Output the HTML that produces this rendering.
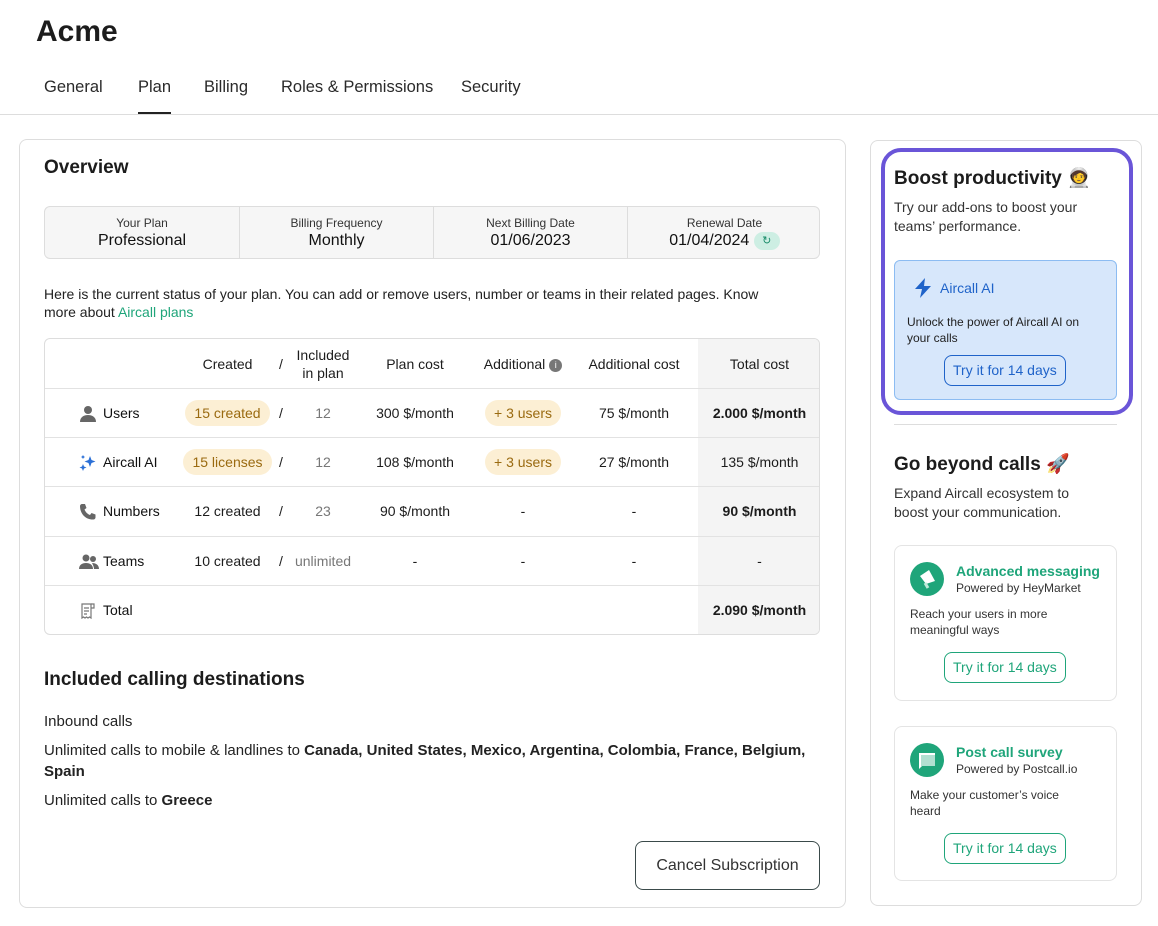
<!DOCTYPE html>
<html><head><meta charset="utf-8"><style>
*{box-sizing:border-box;margin:0;padding:0}
body{width:1158px;height:926px;background:#fff;font-family:"Liberation Sans",sans-serif;color:#1c1c1c;position:relative;overflow:hidden}
.a{position:absolute}
.tab{position:absolute;top:78px;font-size:16.5px;color:#2a2a2a}
.sum div.c{position:absolute;top:0;height:52px;width:194px;text-align:center;border-left:1px solid #ddd}
.sum .l{font-size:12px;color:#333;margin-top:9px}
.sum .v{font-size:16px;margin-top:2px;color:#111}
.row{position:absolute;left:0;width:775px;height:50px;border-top:1px solid #e2e2e2}
.cell{position:absolute;top:0;height:49px;line-height:49px;font-size:14px;text-align:center}
.pill{display:inline-block;background:#fcefd4;color:#9a6a10;border-radius:14px;padding:0 9px;line-height:26px}
.g{color:#777}
.lbl{position:absolute;left:58px;top:0;line-height:49px;font-size:14px;color:#111}
.ic{position:absolute;left:34px;top:16px}
.btn{display:inline-block;border:1.5px solid #1fa57a;color:#1fa57a;border-radius:8px;font-size:14px;padding:0 8px;line-height:29px}
.card{position:absolute;left:894px;width:223px;border:1px solid #e4e4e4;border-radius:8px}
</style></head><body>
<div class="a" style="left:36px;top:15px;font-size:30px;font-weight:bold">Acme</div>
<div class="tab" style="left:44px">General</div>
<div class="tab" style="left:138px">Plan</div>
<div class="tab" style="left:204px">Billing</div>
<div class="tab" style="left:281px">Roles &amp; Permissions</div>
<div class="tab" style="left:461px">Security</div>
<div class="a" style="left:138px;top:112px;width:33px;height:2px;background:#222"></div>
<div class="a" style="left:0;top:114px;width:1158px;height:1px;background:#ddd"></div>

<div class="a" style="left:19px;top:139px;width:827px;height:769px;border:1px solid #ddd;border-radius:8px"></div>
<div class="a" style="left:44px;top:157px;font-size:19px;font-weight:bold">Overview</div>
<div class="a sum" style="left:44px;top:206px;width:776px;height:53px;background:#f6f6f6;border:1px solid #ddd;border-radius:6px;overflow:hidden">
 <div class="c" style="left:0;border-left:none"><div class="l">Your Plan</div><div class="v">Professional</div></div>
 <div class="c" style="left:194px"><div class="l">Billing Frequency</div><div class="v">Monthly</div></div>
 <div class="c" style="left:388px"><div class="l">Next Billing Date</div><div class="v">01/06/2023</div></div>
 <div class="c" style="left:582px"><div class="l">Renewal Date</div><div class="v">01/04/2024 <span style="display:inline-block;width:26px;height:18px;background:#cdeee3;border-radius:9px;font-size:11px;color:#1a8c6a;line-height:18px;vertical-align:middle">↻</span></div></div>
</div>
<div class="a" style="left:44px;top:285px;width:750px;font-size:14px;line-height:18px;color:#222">Here is the current status of your plan. You can add or remove users, number or teams in their related pages. Know more about <span style="color:#1fa57a">Aircall plans</span></div>

<div class="a" style="left:44px;top:338px;width:776px;height:297px;border:1px solid #ddd;border-radius:6px;overflow:hidden">
 <div class="a" style="left:653px;top:0;width:123px;height:297px;background:#f4f4f4"></div>
 <div class="cell" style="left:140px;width:85px;top:0;height:50px;line-height:50px">Created</div>
 <div class="cell" style="left:226px;width:20px;height:50px;line-height:50px">/</div>
 <div class="cell" style="left:240px;width:76px;line-height:18px;top:7px;height:auto">Included<br>in plan</div>
 <div class="cell" style="left:320px;width:100px;height:50px;line-height:50px">Plan cost</div>
 <div class="cell" style="left:420px;width:116px;height:50px;line-height:50px">Additional <span style="display:inline-block;width:13px;height:13px;border-radius:50%;background:#777;color:#fff;font-size:9px;line-height:13px;vertical-align:1px">i</span></div>
 <div class="cell" style="left:530px;width:118px;height:50px;line-height:50px">Additional cost</div>
 <div class="cell" style="left:653px;width:123px;height:50px;line-height:50px">Total cost</div>

 <div class="row" style="top:49px">
  <svg class="ic" width="18" height="18" viewBox="0 0 18 18"><circle cx="9" cy="5" r="4" fill="#666"/><path d="M1 17c0-5 4-7 8-7s8 2 8 7z" fill="#666"/></svg>
  <div class="lbl">Users</div>
  <div class="cell" style="left:135px;width:95px"><span class="pill">15 created</span></div>
  <div class="cell" style="left:226px;width:20px">/</div>
  <div class="cell g" style="left:240px;width:76px">12</div>
  <div class="cell" style="left:320px;width:100px">300 $/month</div>
  <div class="cell" style="left:420px;width:116px"><span class="pill">+ 3 users</span></div>
  <div class="cell" style="left:530px;width:118px">75 $/month</div>
  <div class="cell" style="left:653px;width:123px;font-weight:bold">2.000 $/month</div>
 </div>
 <div class="row" style="top:98px">
  <svg class="ic" width="18" height="18" viewBox="0 0 18 18" fill="#2a6fd6"><path d="M11 2l1.5 4 4 1.5-4 1.5L11 13l-1.5-4-4-1.5 4-1.5z"/><path d="M4 10l1 2.5 2.5 1-2.5 1L4 17l-1-2.5L.5 13.5l2.5-1z"/><path d="M4 1l.7 1.3L6 3l-1.3.7L4 5l-.7-1.3L2 3l1.3-.7z"/></svg>
  <div class="lbl">Aircall AI</div>
  <div class="cell" style="left:135px;width:95px"><span class="pill">15 licenses</span></div>
  <div class="cell" style="left:226px;width:20px">/</div>
  <div class="cell g" style="left:240px;width:76px">12</div>
  <div class="cell" style="left:320px;width:100px">108 $/month</div>
  <div class="cell" style="left:420px;width:116px"><span class="pill">+ 3 users</span></div>
  <div class="cell" style="left:530px;width:118px">27 $/month</div>
  <div class="cell" style="left:653px;width:123px">135 $/month</div>
 </div>
 <div class="row" style="top:147px">
  <svg class="ic" width="18" height="18" viewBox="0 0 18 18"><path d="M3 1l3 0 1.5 4-2 1.5c1 2.5 3 4.5 5.5 5.5l1.5-2 4 1.5v3c0 1-1 2-2 2C7 17 1 11 1 3c0-1 1-2 2-2z" fill="#666"/></svg>
  <div class="lbl">Numbers</div>
  <div class="cell" style="left:135px;width:95px">12 created</div>
  <div class="cell" style="left:226px;width:20px">/</div>
  <div class="cell g" style="left:240px;width:76px">23</div>
  <div class="cell" style="left:320px;width:100px">90 $/month</div>
  <div class="cell" style="left:420px;width:116px">-</div>
  <div class="cell" style="left:530px;width:118px">-</div>
  <div class="cell" style="left:653px;width:123px;font-weight:bold">90 $/month</div>
 </div>
 <div class="row" style="top:197px">
  <svg class="ic" width="20" height="18" viewBox="0 0 20 18" fill="#666"><circle cx="7" cy="5" r="3.5"/><circle cx="14" cy="6" r="3"/><path d="M0 16c0-4 3-6 7-6s7 2 7 6z"/><path d="M13 10c4 0 7 2 7 6h-5c0-2-1-4-2-6z"/></svg>
  <div class="lbl">Teams</div>
  <div class="cell" style="left:135px;width:95px">10 created</div>
  <div class="cell" style="left:226px;width:20px">/</div>
  <div class="cell g" style="left:240px;width:76px">unlimited</div>
  <div class="cell" style="left:320px;width:100px">-</div>
  <div class="cell" style="left:420px;width:116px">-</div>
  <div class="cell" style="left:530px;width:118px">-</div>
  <div class="cell" style="left:653px;width:123px">-</div>
 </div>
 <div class="row" style="top:246px">
  <svg class="ic" width="18" height="18" viewBox="0 0 18 18" fill="none" stroke="#777" stroke-width="1.2"><path d="M3 2h9v14l-1.5-1-1.5 1-1.5-1-1.5 1-1.5-1L3 16z"/><path d="M12 2h3v4h-3M5 6h5M5 9h5M5 12h3"/></svg>
  <div class="lbl">Total</div>
  <div class="cell" style="left:653px;width:123px;font-weight:bold">2.090 $/month</div>
 </div>
</div>

<div class="a" style="left:44px;top:669px;font-size:19px;font-weight:bold">Included calling destinations</div>
<div class="a" style="left:44px;top:711px;width:770px;font-size:15px;line-height:21px;color:#222">Inbound calls<div style="height:8px"></div>Unlimited calls to mobile &amp; landlines to <b>Canada, United States, Mexico, Argentina, Colombia, France, Belgium, Spain</b><div style="height:8px"></div>Unlimited calls to <b>Greece</b></div>
<div class="a" style="left:635px;top:841px;width:185px;height:49px;border:1.5px solid #3a4a4a;border-radius:8px;text-align:center;line-height:48px;font-size:16px;color:#333">Cancel Subscription</div>

<div class="a" style="left:870px;top:140px;width:272px;height:766px;border:1px solid #ddd;border-radius:8px"></div>
<div class="a" style="left:881px;top:148px;width:252px;height:267px;border:4px solid #6a55d8;border-radius:20px"></div>
<div class="a" style="left:894px;top:166px;font-size:19px;font-weight:bold">Boost productivity 🧑‍🚀</div>
<div class="a" style="left:894px;top:198px;width:215px;font-size:14px;line-height:19px;color:#333">Try our add-ons to boost your teams’ performance.</div>
<div class="a" style="left:894px;top:260px;width:223px;height:140px;background:#d7e7fb;border:1.5px solid #8cbcf2;border-radius:6px">
 <svg class="a" style="left:17px;top:16px" width="22" height="22" viewBox="0 0 22 22"><path d="M13 1L3 12h7l-2 9 11-12h-7z" fill="#1f63c9"/></svg>
 <div class="a" style="left:45px;top:19px;font-size:14px;color:#1f63c9">Aircall AI</div>
 <div class="a" style="left:12px;top:53px;width:185px;font-size:12px;line-height:16px;color:#222">Unlock the power of Aircall AI on your calls</div>
 <div class="a" style="left:49px;top:94px;border:1.5px solid #1f63c9;color:#1f63c9;border-radius:8px;font-size:14px;padding:0 8px;line-height:29px">Try it for 14 days</div>
</div>
<div class="a" style="left:894px;top:424px;width:223px;height:1px;background:#ddd"></div>
<div class="a" style="left:894px;top:452px;font-size:19px;font-weight:bold">Go beyond calls 🚀</div>
<div class="a" style="left:894px;top:484px;width:190px;font-size:14px;line-height:19px;color:#333">Expand Aircall ecosystem to boost your communication.</div>

<div class="card" style="top:545px;height:156px">
 <svg class="a" style="left:15px;top:16px" width="34" height="34" viewBox="0 0 34 34"><circle cx="17" cy="17" r="17" fill="#1fa57a"/><path d="M10 14l9-6 6 11-9 3z" fill="#fff"/><path d="M15 21l3 5" stroke="#bfe9da" stroke-width="3"/></svg>
 <div class="a" style="left:61px;top:17px;font-size:14px;font-weight:bold;color:#1fa57a">Advanced messaging</div>
 <div class="a" style="left:61px;top:35px;font-size:12px;color:#333">Powered by HeyMarket</div>
 <div class="a" style="left:15px;top:60px;width:170px;font-size:12px;line-height:16px;color:#333">Reach your users in more meaningful ways</div>
 <div class="a" style="left:49px;top:106px"><span class="btn">Try it for 14 days</span></div>
</div>
<div class="card" style="top:726px;height:155px">
 <svg class="a" style="left:15px;top:16px" width="34" height="34" viewBox="0 0 34 34"><circle cx="17" cy="17" r="17" fill="#1fa57a"/><path d="M9 10h16v13H12l-3 3z" fill="#fff"/><path d="M11 12h14v11H11z" fill="#1fa57a" opacity=".35"/></svg>
 <div class="a" style="left:61px;top:17px;font-size:14px;font-weight:bold;color:#1fa57a">Post call survey</div>
 <div class="a" style="left:61px;top:35px;font-size:12px;color:#333">Powered by Postcall.io</div>
 <div class="a" style="left:15px;top:60px;width:170px;font-size:12px;line-height:16px;color:#333">Make your customer’s voice heard</div>
 <div class="a" style="left:49px;top:106px"><span class="btn">Try it for 14 days</span></div>
</div>
</body></html>
